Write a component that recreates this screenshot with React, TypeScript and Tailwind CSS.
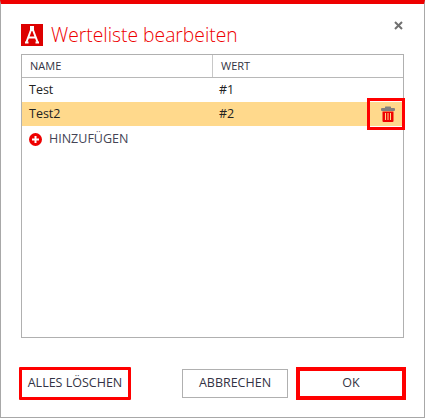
import React from "react";

const font = { fontFamily: '"Open Sans", "Noto Sans", sans-serif' };

function Logo() {
  return (
    <svg width="22" height="22" viewBox="0 0 22 22" className="shrink-0">
      <rect width="22" height="22" fill="#dd0000" />
      <path d="M10 6 L5.5 18 M12 6 L16.5 18 M7.5 13.5 H14.5" stroke="#fff" strokeWidth="2" fill="none" />
      <rect x="9" y="2" width="4" height="5" fill="#fff" />
      <rect x="4" y="17.5" width="3.5" height="2" fill="#fff" />
      <rect x="14.5" y="17.5" width="3.5" height="2" fill="#fff" />
    </svg>
  );
}

function Trash() {
  return (
    <svg width="14" height="16" viewBox="0 0 14 16">
      <path d="M4 2.5 V1 a0.6 0.6 0 0 1 0.6 -0.6 H9.4 a0.6 0.6 0 0 1 0.6 0.6 V2.5" fill="#808080" />
      <rect x="0" y="2" width="14" height="3" rx="1" fill="#808080" />
      <path d="M1.5 5.5 H12.5 V15 a1 1 0 0 1 -1 1 H2.5 a1 1 0 0 1 -1 -1 Z" fill="#f00000" />
      <path d="M4.5 7 V14 M7 7 V14 M9.5 7 V14" stroke="#ffd98c" strokeWidth="1" />
    </svg>
  );
}

function Plus() {
  return (
    <svg width="13" height="13" viewBox="0 0 13 13" className="shrink-0">
      <circle cx="6.5" cy="6.5" r="6.5" fill="#ee0000" />
      <path d="M6.5 3 V10 M3 6.5 H10" stroke="#fff" strokeWidth="2" />
    </svg>
  );
}

export default function App() {
  return (
    <div className="w-[426px] h-[419px] bg-white overflow-hidden text-[12.5px] text-[#333344]" style={font}>
      <div className="w-[425px] h-[418px] bg-white border-x border-b border-[#a8a8a8] border-t-4 border-t-[#ee0000] flex flex-col pl-5 pr-5">
        <div className="h-[50px] flex items-center relative pt-[11px] shrink-0">
          <Logo />
          <span className="ml-2 text-[19.3px] font-light text-[#ee0000] leading-none">Werteliste bearbeiten</span>
          <svg width="9" height="9" viewBox="0 0 9 9" className="absolute right-[1px] top-[17px]">
            <path d="M1 1 L8 8 M8 1 L1 8" stroke="#707070" strokeWidth="2" />
          </svg>
        </div>
        <div className="w-[383px] h-[284px] border border-[#b0b0b0] flex flex-col shrink-0">
          <div className="h-[23px] grid grid-cols-[191px_1fr] border-b border-[#b8b8b8] shrink-0 text-[11px] text-[#334]">
            <div className="flex items-center pl-2 border-r border-[#c8c8c8]">NAME</div>
            <div className="flex items-center pl-2">WERT</div>
          </div>
          <div className="h-[24px] grid grid-cols-[192px_1fr] items-center text-[#222]">
            <div className="pl-[7px]">Test</div>
            <div className="pl-[5px]">#1</div>
          </div>
          <div className="h-[24px] grid grid-cols-[192px_1fr] items-center bg-[#ffd98c] text-[#222] relative">
            <div className="pl-[7px]">Test2</div>
            <div className="pl-[5px]">#2</div>
            <div className="absolute left-[345px] top-[-4px] w-[38px] h-[32px] border-[3px] border-[#ff0000] flex items-center justify-center pl-[3px]">
              <Trash />
            </div>
          </div>
          <div className="h-[24px] flex items-center pl-[7px] gap-[7px] pt-[2px] text-[#444455]">
            <Plus />
            <span>HINZUFÜGEN</span>
          </div>
        </div>
        <div className="flex items-center mt-[31px] h-[29px] shrink-0 text-[12.5px]">
          <button className="relative w-[108px] h-[29px] border border-[#b0b0b0] bg-white text-[#333344]">
            ALLES LÖSCHEN
            <span className="absolute left-[-3px] right-[-3px] top-[-3px] bottom-[-3px] border-[3px] border-[#ff0000] rounded-[1px]" />
          </button>
          <button className="w-[106px] h-[29px] ml-[53px] border border-[#b0b0b0] bg-white text-[#333344]">
            ABBRECHEN
          </button>
          <button className="relative w-[106px] h-[29px] ml-[10px] border border-[#b0b0b0] bg-white text-[#333344]">
            OK
            <span className="absolute left-[-3px] right-[-3px] top-[-3px] bottom-[-3px] border-[4px] border-[#ff0000]" />
          </button>
        </div>
      </div>
    </div>
  );
}
